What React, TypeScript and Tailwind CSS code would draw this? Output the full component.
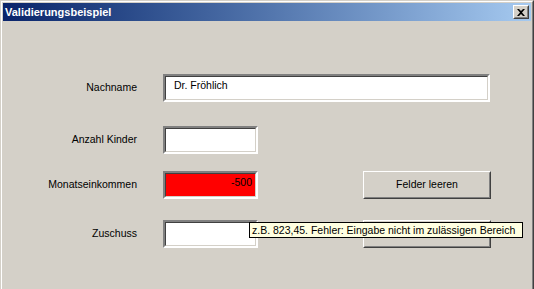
const sunken =
  'border-2 border-t-[#808080] border-l-[#808080] border-b-white border-r-white';
const sunkenInner =
  'h-full w-full border border-t-[#404040] border-l-[#404040] border-b-[#d4d0c8] border-r-[#d4d0c8]';

function Field({ value, w, red, right }: { value?: string; w: string; red?: boolean; right?: boolean }) {
  return (
    <div className={`${w} h-[28px] ${sunken}`}>
      <div
        className={`${sunkenInner} ${red ? 'bg-[#ff0000]' : 'bg-white'} flex items-start pt-[2px] ${
          right ? 'justify-end pr-[3px]' : 'pl-[8px]'
        }`}
      >
        {value && <span className="leading-[13px]">{value}</span>}
      </div>
    </div>
  );
}

function Button({ label }: { label?: string }) {
  return (
    <div className="w-[128px] h-[28px] border border-t-white border-l-white border-b-[#404040] border-r-[#404040]">
      <div className="h-full w-full border border-t-[#d4d0c8] border-l-[#d4d0c8] border-b-[#808080] border-r-[#808080] flex items-center justify-center">
        {label}
      </div>
    </div>
  );
}

function Row({ label, children, className }: { label: string; children: React.ReactNode; className?: string }) {
  return (
    <div className={`flex items-center ${className ?? ''}`}>
      <div className="w-[137px] text-right">{label}</div>
      <div className="ml-[26px] flex items-center">{children}</div>
    </div>
  );
}

export default function App() {
  return (
    <div className="w-[534px] h-[289px] overflow-hidden bg-[#d4d0c8] text-[10.5px] text-black font-['Liberation_Sans',Arial,sans-serif]">
      <div className="h-full w-full border-l border-t border-r border-l-[#d4d0c8] border-t-[#d4d0c8] border-r-[#404040]">
        <div className="h-full w-full border-l border-t border-r border-l-white border-t-white border-r-[#808080] px-[1px] pt-[1px] relative">
          {/* Title bar */}
          <div className="h-[18px] flex items-center justify-between bg-gradient-to-r from-[#0a246a] to-[#a6caf0] pl-[2px] pr-[2px]">
            <span className="text-white font-bold text-[11px] leading-none">Validierungsbeispiel</span>
            <div className="w-[16px] h-[14px] border border-t-white border-l-white border-b-[#404040] border-r-[#404040] bg-[#d4d0c8]">
              <div className="h-full w-full border border-t-[#d4d0c8] border-l-[#d4d0c8] border-b-[#808080] border-r-[#808080] flex items-center justify-center">
                <svg width="8" height="7" viewBox="0 0 8 7">
                  <path d="M0 0h2l2 2 2-2h2L5 3.5 8 7H6L4 5 2 7H0l3-3.5z" fill="#000" />
                </svg>
              </div>
            </div>
          </div>

          {/* Form */}
          <div className="pt-[53px] -ml-[3px]">
            <Row label="Nachname">
              <Field value="Dr. Fröhlich" w="w-[327px]" />
            </Row>
            <Row label="Anzahl Kinder" className="mt-[24px]">
              <Field w="w-[95px]" />
            </Row>
            <Row label="Monatseinkommen" className="mt-[17px]">
              <Field value="-500" w="w-[95px]" red right />
              <div className="ml-[105px]">
                <Button label="Felder leeren" />
              </div>
            </Row>
            <Row label="Zuschuss" className="mt-[21px]">
              <Field w="w-[95px]" />
              <div className="ml-[105px]">
                <Button />
              </div>
            </Row>
          </div>

          {/* Tooltip */}
          <div className="absolute left-[247px] top-[220px] h-[16px] w-[274px] bg-[#ffffe1] border border-black pl-[2px] flex items-center whitespace-nowrap leading-none">
            z.B. 823,45. Fehler: Eingabe nicht im zulässigen Bereich
          </div>
        </div>
      </div>
    </div>
  );
}
